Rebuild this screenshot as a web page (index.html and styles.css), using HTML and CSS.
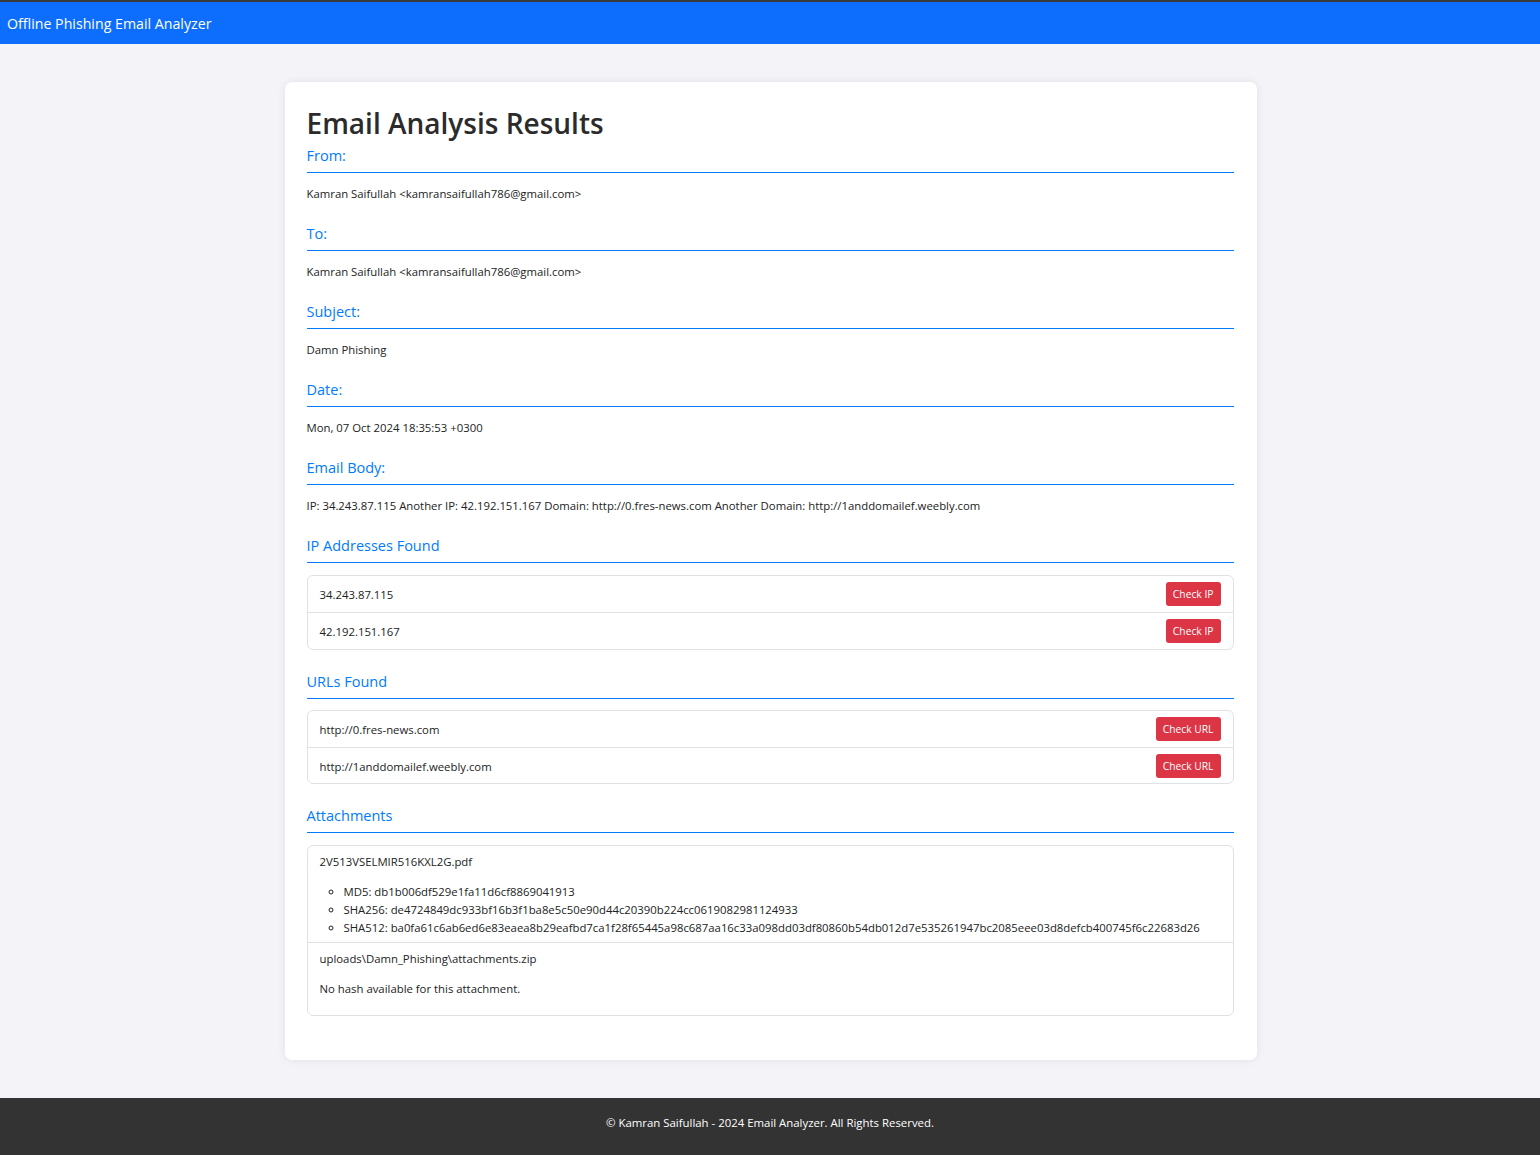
FILE: index.html
```html
<!DOCTYPE html>
<html lang="en">
<head>
<meta charset="utf-8">
<title>Email Analysis Results</title>
<link rel="stylesheet" href="styles.css">
</head>
<body>
<header class="topbar">
  <span class="brand">Offline Phishing Email Analyzer</span>
</header>
<main class="page">
  <section class="card">
    <h1 class="title">Email Analysis Results</h1>

    <h2 class="label">From:</h2>
    <p class="value">Kamran Saifullah &lt;kamransaifullah786@gmail.com&gt;</p>

    <h2 class="label">To:</h2>
    <p class="value">Kamran Saifullah &lt;kamransaifullah786@gmail.com&gt;</p>

    <h2 class="label">Subject:</h2>
    <p class="value">Damn Phishing</p>

    <h2 class="label">Date:</h2>
    <p class="value">Mon, 07 Oct 2024 18:35:53 +0300</p>

    <h2 class="label">Email Body:</h2>
    <p class="value">IP: 34.243.87.115 Another IP: 42.192.151.167 Domain: http://0.fres-news.com Another Domain: http://1anddomailef.weebly.com</p>

    <h2 class="label">IP Addresses Found</h2>
    <ul class="list">
      <li class="list-item"><span>34.243.87.115</span><button class="btn">Check IP</button></li>
      <li class="list-item"><span>42.192.151.167</span><button class="btn">Check IP</button></li>
    </ul>

    <h2 class="label">URLs Found</h2>
    <ul class="list list-urls">
      <li class="list-item"><span>http://0.fres-news.com</span><button class="btn">Check URL</button></li>
      <li class="list-item"><span>http://1anddomailef.weebly.com</span><button class="btn">Check URL</button></li>
    </ul>

    <h2 class="label">Attachments</h2>
    <ul class="list">
      <li class="attach">
        <p class="attach-name">2V513VSELMIR516KXL2G.pdf</p>
        <ul class="hashes">
          <li>MD5: db1b006df529e1fa11d6cf8869041913</li>
          <li>SHA256: de4724849dc933bf16b3f1ba8e5c50e90d44c20390b224cc0619082981124933</li>
          <li>SHA512: ba0fa61c6ab6ed6e83eaea8b29eafbd7ca1f28f65445a98c687aa16c33a098dd03df80860b54db012d7e535261947bc2085eee03d8defcb400745f6c22683d26</li>
        </ul>
      </li>
      <li class="attach">
        <p class="attach-name">uploads\Damn_Phishing\attachments.zip</p>
        <p class="attach-note">No hash available for this attachment.</p>
      </li>
    </ul>
  </section>
</main>
<footer class="footer">
  <p>© Kamran Saifullah - 2024 Email Analyzer. All Rights Reserved.</p>
</footer>
</body>
</html>
```

FILE: styles.css
```css
* { box-sizing: border-box; }

html, body {
  margin: 0;
  padding: 0;
}

body {
  font-family: "Open Sans", "Noto Sans", "Liberation Sans", sans-serif;
  background: #f4f4f8;
  color: #212529;
}

.topbar {
  border-top: 2px solid #3a3a3a;
  background: #0d6efd;
  height: 44px;
  display: flex;
  align-items: center;
  padding: 0 7px;
}

.brand {
  color: #fff;
  font-size: 14.2px;
}

.page {
  padding: 38px 0 38px 1px;
}

.card {
  width: 972px;
  margin: 0 auto;
  background: #fff;
  border-radius: 7px;
  box-shadow: 0 0 8px rgba(0, 0, 0, 0.08);
  padding: 22px 23px 22px 22px;
}

.title {
  font-size: 28px;
  font-weight: 600;
  color: #2b2b2b;
  line-height: 38px;
  margin: 0 0 4px;
}

.label {
  font-size: 14.5px;
  font-weight: 500;
  color: #007bff;
  line-height: 19px;
  margin: 0 0 12px;
  padding-bottom: 7px;
  border-bottom: 1px solid #007bff;
}

.value {
  font-size: 11.35px;
  line-height: 18px;
  color: #222;
  margin: 0 0 21px;
}

.list {
  list-style: none;
  margin: 0 0 22px;
  padding: 0;
  border: 1px solid #dee2e6;
  border-radius: 6px;
}

.list-urls {
  margin-top: -1px;
}

.list-item {
  display: flex;
  align-items: center;
  justify-content: space-between;
  padding: 6px 12px;
  font-size: 11.35px;
  color: #222;
}

.list-urls .list-item:last-child {
  padding-bottom: 5px;
}

.list-item + .list-item {
  border-top: 1px solid #dee2e6;
}

.attach + .attach {
  border-top: 1px solid #dee2e6;
}

.btn {
  font-family: inherit;
  font-size: 10.3px;
  color: #fff;
  background: #dc3545;
  border: none;
  border-radius: 3px;
  padding: 0 7px;
  height: 24px;
  line-height: 24px;
}

.attach {
  padding: 7px 12px 5px;
  font-size: 11.35px;
  color: #222;
}

.attach-name {
  margin: 0 0 12px;
  line-height: 18px;
}

.attach-note {
  margin: 0 0 12px;
  line-height: 18px;
}

.hashes {
  list-style: circle;
  margin: 0;
  padding-left: 24px;
  line-height: 18px;
}

.footer {
  background: #333;
  color: #fff;
  text-align: center;
  font-size: 11.4px;
  padding: 16px 0 24px;
}

.footer p {
  margin: 0;
  line-height: 18px;
}
```
